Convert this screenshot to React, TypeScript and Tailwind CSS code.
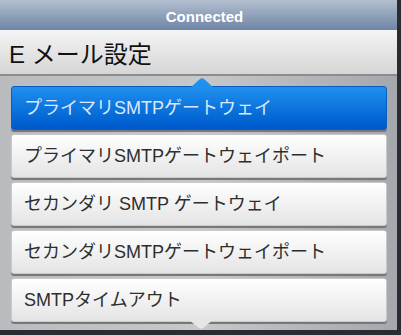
const items = [
  { label: 'プライマリSMTPゲートウェイ', selected: true },
  { label: 'プライマリSMTPゲートウェイポート' },
  { label: 'セカンダリ SMTP ゲートウェイ' },
  { label: 'セカンダリSMTPゲートウェイポート' },
  { label: 'SMTPタイムアウト', last: true },
]

const jp = "font-['Liberation_Sans','Noto_Sans_CJK_JP',sans-serif]"

export default function App() {
  return (
    <div className="w-[401px] h-[335px] bg-[#2b2c31] overflow-hidden">
      <div className="w-[397px] h-[330px] flex flex-col">
        {/* status bar */}
        <div className="h-[30px] flex items-center justify-center pl-3 pt-[4px] bg-gradient-to-b from-[#b3bfcf] to-[#6f85a6]">
          <span className="font-['Liberation_Sans',sans-serif] font-bold text-[15px] text-white">Connected</span>
        </div>

        {/* title */}
        <div className="h-[46px] flex items-center pl-[9px] pt-[6px] bg-gradient-to-b from-[#f4f4f4] to-[#d6d6d6] border-b-2 border-[#8c8c8c]">
          <h1 className={`${jp} text-[24px] text-[#111] leading-none`}>E メール設定</h1>
        </div>

        {/* picker list */}
        <div className="flex-1 bg-gradient-to-r from-[#b9bbbe] via-[#c6c8ca] to-[#a4a8ac] px-[11px] pt-[10px] pr-[10px]">
          <div className="flex flex-col gap-[4px]">
            {items.map((item) => (
              <div
                key={item.label}
                className={
                  'relative h-[44px] flex items-center pl-[12px] rounded-[3px] shadow-[0_2px_0_#76787c] ' +
                  (item.selected
                    ? 'bg-gradient-to-b from-[#2090ee] to-[#0058cc] border border-[#0a5cc0]'
                    : 'bg-gradient-to-b from-[#ffffff] to-[#e4e4e4] border border-[#c9c9c9]')
                }
              >
                {item.selected && (
                  <svg className="absolute left-[178px] -top-[9px]" width="24" height="10" viewBox="0 0 24 10">
                    <path d="M0 10 L10 1 Q12 -0.5 14 1 L24 10 Z" fill="#2090ee" />
                  </svg>
                )}
                {item.last && (
                  <svg className="absolute left-[177px] -bottom-[8px]" width="24" height="9" viewBox="0 0 24 9">
                    <path d="M0 0 L10 8 Q12 9.5 14 8 L24 0 Z" fill="#e6e6e6" />
                  </svg>
                )}
                <span
                  className={`${jp} text-[18px] leading-none ${item.selected ? 'text-[#d9e8fb]' : 'text-[#2e2e2e]'}`}
                >
                  {item.label}
                </span>
              </div>
            ))}
          </div>
        </div>
      </div>
    </div>
  )
}
